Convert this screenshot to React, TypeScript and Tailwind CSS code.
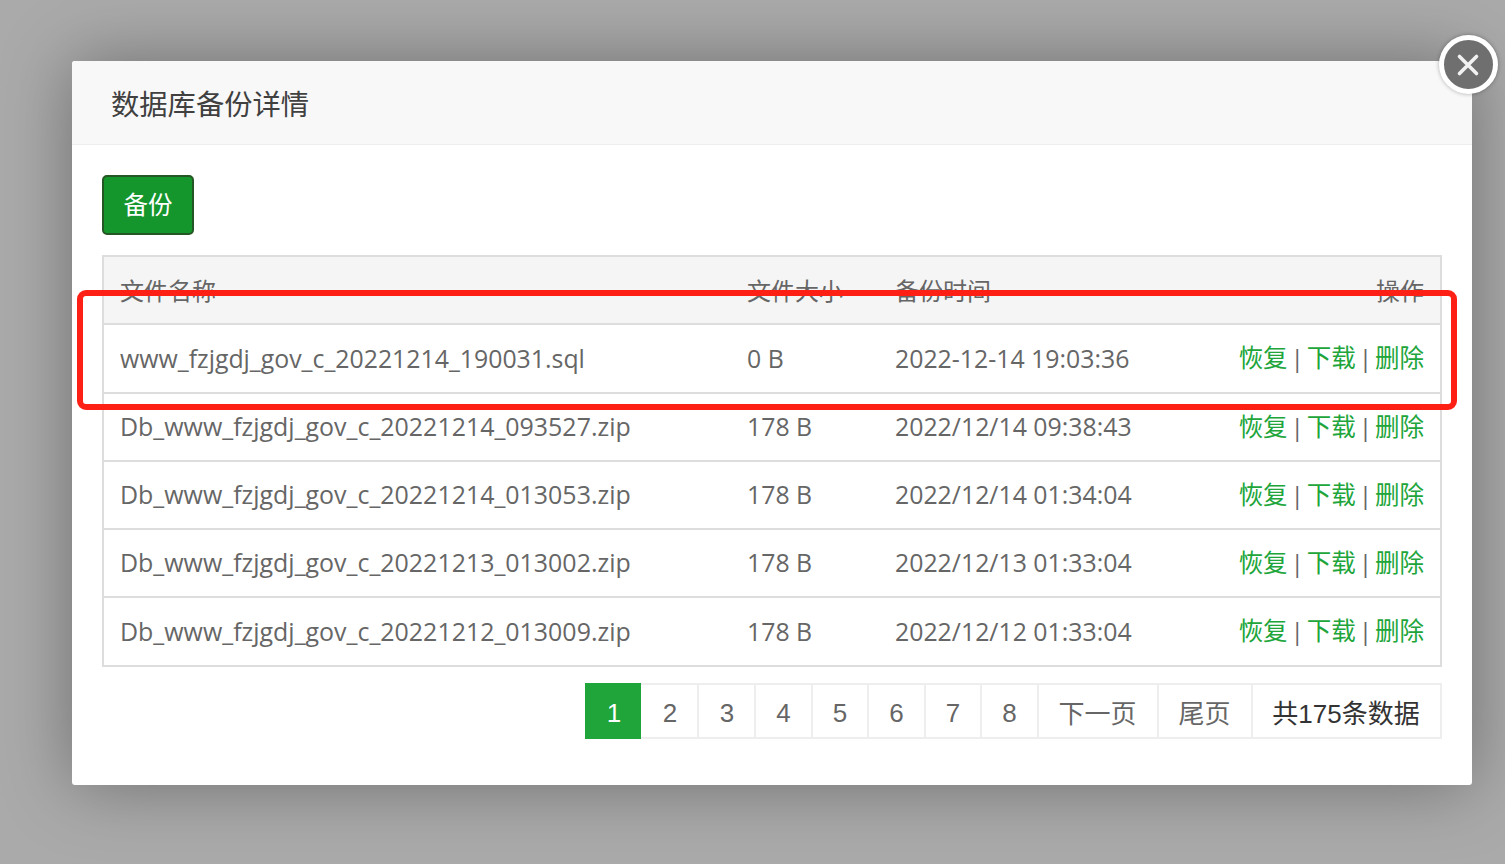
import React from "react";

const rows = [
  ["www_fzjgdj_gov_c_20221214_190031.sql", "0 B", "2022-12-14 19:03:36"],
  ["Db_www_fzjgdj_gov_c_20221214_093527.zip", "178 B", "2022/12/14 09:38:43"],
  ["Db_www_fzjgdj_gov_c_20221214_013053.zip", "178 B", "2022/12/14 01:34:04"],
  ["Db_www_fzjgdj_gov_c_20221213_013002.zip", "178 B", "2022/12/13 01:33:04"],
  ["Db_www_fzjgdj_gov_c_20221212_013009.zip", "178 B", "2022/12/12 01:33:04"],
];

const pages = [
  ["2", "w-[58px] pl-[2px] pt-[5px]"],
  ["3", "w-[57px] pl-[1px] pt-[5px]"],
  ["4", "w-[57px] pt-[5px]"],
  ["5", "w-[56px] pt-[5px]"],
  ["6", "w-[57px] pt-[5px]"],
  ["7", "w-[56px] pt-[5px]"],
  ["8", "w-[57px] pt-[5px]"],
  ["下一页", "w-[120px] pr-[1px] pt-[7px]"],
  ["尾页", "w-[94px] pr-[1px] pt-[7px]"],
];

const sans = "font-['Open_Sans','Noto_Sans_CJK_SC',sans-serif]";
const arial = "font-['Liberation_Sans','Noto_Sans_CJK_SC',sans-serif]";

function Sep() {
  return <span className="inline-block w-[19.2px] text-center text-[#666666]">|</span>;
}

export default function App() {
  return (
    <div className={`relative h-[864px] w-[1505px] overflow-hidden bg-[#aaaaaa] pl-[72px] pt-[61px] ${sans}`}>
      <div className="relative flex h-[724px] w-[1400px] flex-col rounded-[3px] bg-white shadow-[0_0_70px_rgba(0,0,0,0.35)]">
        <div className="flex h-[84px] shrink-0 items-center rounded-t-[3px] border-b border-[#eeeeee] bg-[#f8f8f8] pl-[39px] pt-[4px] text-[28.3px] text-[#404040]">
          数据库备份详情
        </div>

        <div className="flex flex-1 flex-col px-[30px] pt-[30px]">
          <button className="flex h-[60px] w-[92px] items-center justify-center rounded-[5px] border-2 border-[#255625] bg-[#15962c] text-[24.5px] text-white">
            备份
          </button>

          <table className="mt-[20px] w-[1340px] table-fixed border-collapse border-2 border-[#dddddd] text-[24px] text-[#666666]">
            <colgroup>
              <col className="w-[628px]" />
              <col className="w-[148px]" />
              <col className="w-[300px]" />
              <col />
            </colgroup>
            <thead>
              <tr className="h-[68px] bg-[#f5f5f5]">
                <th className="px-[16px] pt-[2px] text-left font-normal">文件名称</th>
                <th className="px-[16px] pt-[2px] text-left font-normal">文件大小</th>
                <th className="px-[16px] pt-[2px] text-left font-normal">备份时间</th>
                <th className="px-[16px] pt-[2px] text-right font-normal">操作</th>
              </tr>
            </thead>
            <tbody>
              {rows.map((r, i) => (
                <tr key={r[0]} className={`${i === 0 || i === 4 ? "h-[69px]" : "h-[68px]"} border-t-2 border-[#dddddd]`}>
                  <td className={`whitespace-nowrap px-[16px] ${i === 0 ? "text-[24.85px]" : "text-[24.95px]"}`}>{r[0]}</td>
                  <td className="whitespace-nowrap px-[16px] text-[24.85px]">{r[1]}</td>
                  <td className="whitespace-nowrap px-[16px] text-[24.85px]">{r[2]}</td>
                  <td className="whitespace-nowrap px-[16px] text-right text-[24.5px]">
                    <span className="text-[#20a53a]">恢复</span>
                    <Sep />
                    <span className="text-[#20a53a]">下载</span>
                    <Sep />
                    <span className="text-[#20a53a]">删除</span>
                  </td>
                </tr>
              ))}
            </tbody>
          </table>

          <div className={`mt-[16px] flex h-[56px] justify-end text-[#666666] ${arial}`}>
            <span className="flex w-[56px] items-center justify-center bg-[#20a53a] pl-[2px] pt-[5px] text-[26px] text-white">1</span>
            <div className="flex border-2 border-l-0 border-[#eeeeee]">
              {pages.map(([label, w]) => (
                <span key={label} className={`flex ${w} items-center justify-center border-r-2 border-[#eeeeee] text-[26px]`}>
                  {label}
                </span>
              ))}
              <span className="flex w-[187px] items-center justify-center pr-[1px] pt-[7px] text-[26px] text-[#333333]">共175条数据</span>
            </div>
          </div>
        </div>

        <div className="absolute left-[1367px] top-[-26px] flex h-[59px] w-[59px] items-center justify-center rounded-full border-[5px] border-white bg-[#6f6f6f] shadow-[0_0_4px_rgba(0,0,0,0.3)]">
          <svg className="mr-[1px]" width="24" height="24" viewBox="0 0 24 24" fill="none" stroke="#f2f2f2" strokeWidth="3.6" strokeLinecap="round">
            <path d="M3.5 3.5 20.5 20.5M20.5 3.5 3.5 20.5" />
          </svg>
        </div>
      </div>

      <div className="pointer-events-none absolute left-[77px] top-[290px] h-[120px] w-[1380px] rounded-[9px] border-[6px] border-[#ff2015]" />
    </div>
  );
}
